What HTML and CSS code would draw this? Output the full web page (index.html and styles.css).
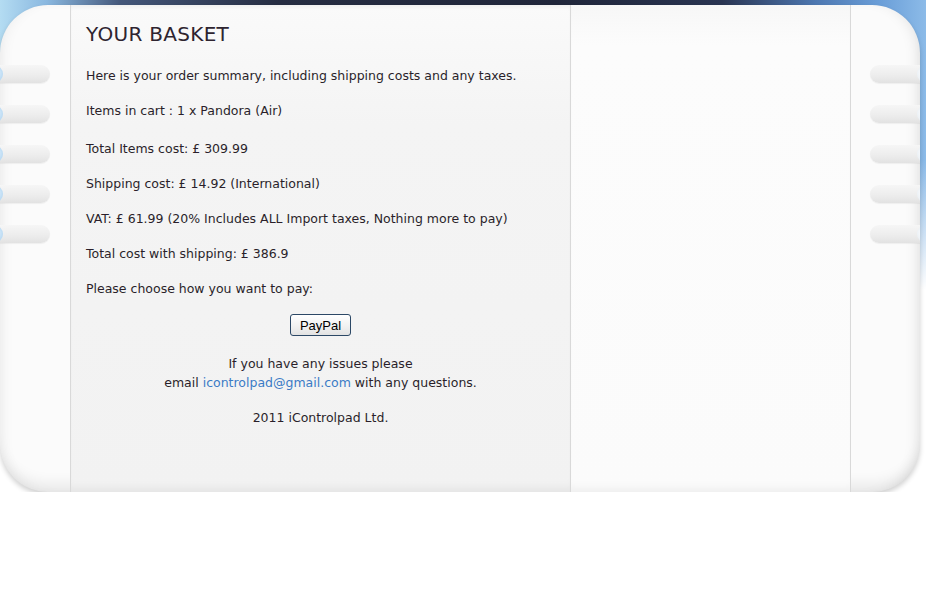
FILE: index.html
```html
<!DOCTYPE html>
<html>
<head>
<meta charset="utf-8">
<title>Your Basket</title>
<link rel="stylesheet" href="styles.css">
</head>
<body>
<div class="panel">
  <div class="side side-left">
    <div class="tab"></div><div class="tab"></div><div class="tab"></div><div class="tab"></div><div class="tab"></div>
  </div>
  <div class="main">
    <h1 class="title">YOUR BASKET</h1>
    <p class="line">Here is your order summary, including shipping costs and any taxes.</p>
    <p class="line">Items in cart : 1 x Pandora (Air)</p>
    <p class="line gap">Total Items cost: £ 309.99</p>
    <p class="line">Shipping cost: £ 14.92 (International)</p>
    <p class="line">VAT: £ 61.99 (20% Includes ALL Import taxes, Nothing more to pay)</p>
    <p class="line">Total cost with shipping: £ 386.9</p>
    <p class="line">Please choose how you want to pay:</p>
    <div class="pay"><button class="paypal">PayPal</button></div>
    <p class="center">If you have any issues please<br>email <a class="mail" href="#">icontrolpad@gmail.com</a> with any questions.</p>
    <p class="center copy">2011 iControlpad Ltd.</p>
  </div>
  <div class="aside"></div>
  <div class="side side-right">
    <div class="tab"></div><div class="tab"></div><div class="tab"></div><div class="tab"></div><div class="tab"></div>
  </div>
</div>
</body>
</html>
```
FILE: styles.css
```css
html, body { margin: 0; padding: 0; }
body {
  background-color: #fff;
  background-image:
    linear-gradient(to bottom, rgba(255,255,255,0) 0, rgba(255,255,255,0) 160px, #fff 290px),
    linear-gradient(to right, #b4dcf2 0, #8ab8e0 5%, #44577a 13%, #262d42 30%, #20263a 60%, #2a3552 78%, #4d77b0 88%, #6a9ed8 95%, #8cbbe8 100%);
  background-repeat: no-repeat;
  background-size: 100% 290px, 100% 290px;
  font-family: "DejaVu Sans", Verdana, sans-serif;
  color: #2a1f2a;
  padding-top: 5px;
}
.panel {
  width: 920px;
  height: 487px;
  display: flex;
  border-radius: 48px;
  background: #fbfbfb;
  box-shadow: 0 3px 5px rgba(0,0,0,0.18), inset 0 -14px 14px -6px rgba(0,0,0,0.08), inset 10px 0 14px -8px rgba(0,0,0,0.06), inset -10px 0 14px -8px rgba(0,0,0,0.10);
  overflow: hidden;
}
.side {
  flex: none;
  width: 70px;
  display: flex;
  flex-direction: column;
  gap: 22px;
  padding-top: 60px;
  box-sizing: border-box;
}
.side-right { width: 69px; align-items: flex-end; }
.tab {
  position: relative;
  width: 50px;
  height: 18px;
  background: linear-gradient(to bottom, #f6f6f6 0, #ececec 60%, #e2e2e2 100%);
  box-shadow: 0 1px 1px rgba(0,0,0,0.05);
}
.side-left .tab { border-radius: 0 9px 9px 0; }
.side-right .tab { border-radius: 9px 0 0 9px; }
.tab::before {
  content: "";
  position: absolute;
  top: 0;
  width: 18px;
  height: 18px;
  border-radius: 50%;
}
.side-left .tab::before { left: -15px; background: radial-gradient(circle at 60% 45%, #e4f2fc 0, #a8d0f0 75%); }
.side-right .tab::before { right: -15px; background: radial-gradient(circle at 40% 45%, #ffffff 0, #e8eef4 60%, #c8d4e0 90%); }
.main {
  flex: none;
  width: 501px;
  box-sizing: border-box;
  border-left: 1px solid #d9d9d9;
  border-right: 1px solid #d9d9d9;
  background: linear-gradient(to bottom, #fafafa 0, #f4f4f4 120px, #f2f2f2 100%);
  box-shadow: inset 0 4px 4px -2px rgba(0,0,0,0.05), inset 0 -10px 10px -6px rgba(0,0,0,0.06);
  padding: 0 15px;
  font-size: 12.5px;
}
.title {
  margin: 17px 0 0;
  font-size: 20px;
  font-weight: normal;
  line-height: 24px;
  letter-spacing: 0.3px;
  color: #2e2430;
}
.line {
  margin: 16px 0 0;
  line-height: 19px;
}
.title + .line { margin-top: 20px; }
.line.gap { margin-top: 19px; }
.pay {
  display: flex;
  justify-content: center;
  margin-top: 16px;
}
.paypal {
  font-family: "Liberation Sans", Arial, sans-serif;
  font-size: 13px;
  color: #000;
  height: 22px;
  width: 61px;
  padding: 0;
  border: 1px solid #2c4866;
  border-radius: 3px;
  background: linear-gradient(to bottom, #ffffff 0, #f0f0f0 60%, #e2e2e2 100%);
}
.center {
  text-align: center;
  margin: 18px 0 0;
  line-height: 19px;
}
.copy { margin-top: 16px; }
.mail { color: #3b7bc6; text-decoration: none; }
.aside {
  flex: none;
  width: 280px;
  box-sizing: border-box;
  border-right: 1px solid #d9d9d9;
  background: linear-gradient(to bottom, #f7f7f7 0, #fcfcfc 40px, #fbfbfb 100%);
  box-shadow: inset 0 -10px 10px -6px rgba(0,0,0,0.05);
}
```
